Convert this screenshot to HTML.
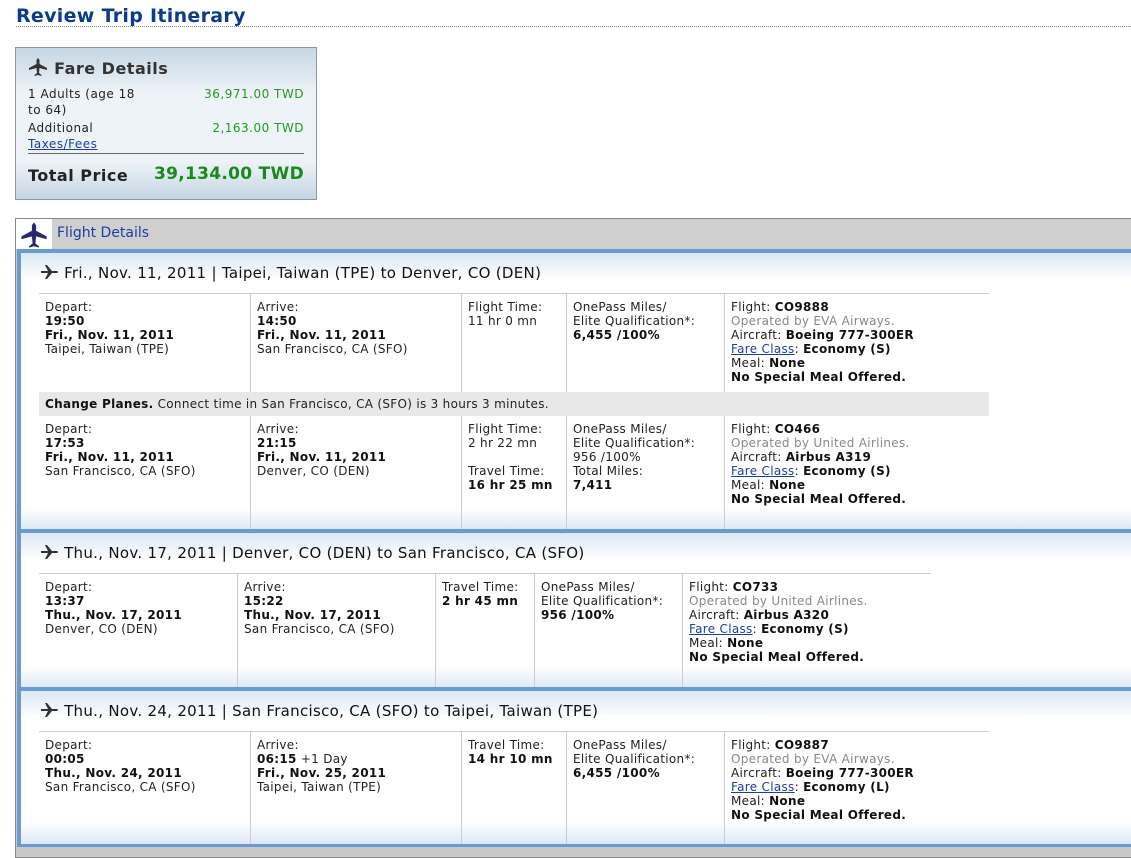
<!DOCTYPE html>
<html><head><meta charset="utf-8"><style>
*{margin:0;padding:0;box-sizing:border-box}
body{width:1131px;height:854px;overflow:hidden;background:#fff;font-family:"DejaVu Sans","Liberation Sans",sans-serif;font-size:12px;letter-spacing:0.3px;color:#222;position:relative}
.abs{position:absolute}
h1{position:absolute;left:16px;top:5px;font-size:19px;font-weight:bold;color:#0b3b8c;letter-spacing:0.3px}
.dots{position:absolute;left:16px;top:26px;width:1115px;border-top:1px dotted #888}
.fare{position:absolute;left:15px;top:47px;width:302px;height:153px;border:1px solid #8a96a2;background:linear-gradient(#c6d6e4,#eef3f8 30%,#eef3f8 75%,#c5d5e3);letter-spacing:0.5px}
.fare .t{position:absolute;left:12px;top:10px;font-size:16px;font-weight:bold;color:#333}
.g{color:#229922}
a{color:#1a3ea8;text-decoration:underline}
.outer{position:absolute;left:15px;top:218px;width:1116px;height:640px;border:1px solid #888;border-right:none;background:#c8c8c8}
.fh{position:absolute;left:0;top:0;width:1116px;height:30px;background:#cfcfcf}
.fh .ic{position:absolute;left:0;top:0;width:36px;height:30px;background:#fff}
.fh .tx{position:absolute;left:41px;top:6px;font-size:14px;color:#1a3ea8;letter-spacing:0}
.sec{position:absolute;left:1px;width:1115px;border-top:4px solid #6a9bd0;border-left:4px solid #6a9bd0;background:linear-gradient(#dce8f4,#fff 28px,#fff calc(100% - 22px),#dce8f4)}
.sh{position:absolute;left:20px;top:11px;font-size:15px;color:#111}
.row{position:absolute;left:18px;border-top:1px solid #ccc}
.c{position:absolute;top:0;padding:6px 6px;line-height:14px;border-left:1px solid #ccc;height:100%;white-space:nowrap}
.c:first-child{border-left:none}
b{color:#111}
.gr{color:#888}
.band{position:absolute;left:18px;width:950px;height:24px;background:#e8e8e8;padding:4px 6px;line-height:16px}
</style></head><body>
<h1>Review Trip Itinerary</h1><div class="dots"></div>
<div class="fare">
<div class="t"><svg width="20" height="18" viewBox="0 0 20 18" style="vertical-align:-2px"><path d="M10 0 L11.5 2 L11.5 6 L19 10 L19 12 L11.5 10 L11 15 L13.5 17 L13.5 18 L10 17 L6.5 18 L6.5 17 L9 15 L8.5 10 L1 12 L1 10 L8.5 6 L8.5 2 Z" fill="#333"/></svg> Fare Details</div>
<div class="abs" style="left:12px;top:38px;line-height:16px;width:118px">1 Adults (age 18 to 64)</div>
<div class="abs g" style="right:12px;top:38px;line-height:16px">36,971.00 TWD</div>
<div class="abs" style="left:12px;top:72px;line-height:16px">Additional<br><a>Taxes/Fees</a></div>
<div class="abs g" style="right:12px;top:72px;line-height:16px">2,163.00 TWD</div>
<div class="abs" style="left:12px;top:105px;width:276px;border-top:1px solid #666"></div>
<div class="abs" style="left:12px;top:118px;font-size:16px;font-weight:bold;color:#222">Total Price</div>
<div class="abs" style="right:12px;top:116px;font-size:17px;font-weight:bold;color:#1a8a1a;letter-spacing:0.3px">39,134.00 TWD</div>
</div>
<div class="outer">
<div class="fh"><div class="ic"><svg width="28" height="26" viewBox="0 0 20 18" style="margin:3px 4px"><path d="M10 0 L11.5 2 L11.5 6 L19 10 L19 12 L11.5 10 L11 15 L13.5 17 L13.5 18 L10 17 L6.5 18 L6.5 17 L9 15 L8.5 10 L1 12 L1 10 L8.5 6 L8.5 2 Z" fill="#2a2a6a"/></svg></div><div class="tx">Flight Details</div></div>

<div class="sec" style="top:30px;height:281px">
<div class="sh"><svg width="18" height="14" viewBox="0 0 18 14" style="vertical-align:-1px"><path d="M0 6 L7 6 L4 0 L6 0 L11 6 L16 6 Q18 7 16 8 L11 8 L6 14 L4 14 L7 8 L0 8 Z" fill="#333"/></svg> Fri., Nov. 11, 2011 | Taipei, Taiwan (TPE) to Denver, CO (DEN)</div>
<div class="row" style="top:40px;width:950px;height:99px">
<div class="c" style="left:0;width:211px">Depart:<br><b>19:50<br>Fri., Nov. 11, 2011</b><br>Taipei, Taiwan (TPE)</div>
<div class="c" style="left:211px;width:211px">Arrive:<br><b>14:50<br>Fri., Nov. 11, 2011</b><br>San Francisco, CA (SFO)</div>
<div class="c" style="left:422px;width:105px">Flight Time:<br>11 hr 0 mn</div>
<div class="c" style="left:527px;width:158px">OnePass Miles/<br>Elite Qualification*:<br><b>6,455 /100%</b></div>
<div class="c" style="left:685px;width:265px">Flight: <b>CO9888</b><br><span class="gr">Operated by EVA Airways.</span><br>Aircraft: <b>Boeing 777-300ER</b><br><a>Fare Class</a>: <b>Economy (S)</b><br>Meal: <b>None</b><br><b>No Special Meal Offered.</b></div>
</div>
<div class="band" style="top:139px"><b>Change Planes.</b> Connect time in San Francisco, CA (SFO) is 3 hours 3 minutes.</div>
<div class="row" style="top:163px;width:950px;height:114px;border-top:none">
<div class="c" style="left:0;width:211px">Depart:<br><b>17:53<br>Fri., Nov. 11, 2011</b><br>San Francisco, CA (SFO)</div>
<div class="c" style="left:211px;width:211px">Arrive:<br><b>21:15<br>Fri., Nov. 11, 2011</b><br>Denver, CO (DEN)</div>
<div class="c" style="left:422px;width:105px">Flight Time:<br>2 hr 22 mn<br><br>Travel Time:<br><b>16 hr 25 mn</b></div>
<div class="c" style="left:527px;width:158px">OnePass Miles/<br>Elite Qualification*:<br>956 /100%<br>Total Miles:<br><b>7,411</b></div>
<div class="c" style="left:685px;width:265px">Flight: <b>CO466</b><br><span class="gr">Operated by United Airlines.</span><br>Aircraft: <b>Airbus A319</b><br><a>Fare Class</a>: <b>Economy (S)</b><br>Meal: <b>None</b><br><b>No Special Meal Offered.</b></div>
</div>
</div>

<div class="sec" style="top:310px;height:159px">
<div class="sh"><svg width="18" height="14" viewBox="0 0 18 14" style="vertical-align:-1px"><path d="M0 6 L7 6 L4 0 L6 0 L11 6 L16 6 Q18 7 16 8 L11 8 L6 14 L4 14 L7 8 L0 8 Z" fill="#333"/></svg> Thu., Nov. 17, 2011 | Denver, CO (DEN) to San Francisco, CA (SFO)</div>
<div class="row" style="top:40px;width:892px;height:115px">
<div class="c" style="left:0;width:198px">Depart:<br><b>13:37<br>Thu., Nov. 17, 2011</b><br>Denver, CO (DEN)</div>
<div class="c" style="left:198px;width:198px">Arrive:<br><b>15:22<br>Thu., Nov. 17, 2011</b><br>San Francisco, CA (SFO)</div>
<div class="c" style="left:396px;width:99px">Travel Time:<br><b>2 hr 45 mn</b></div>
<div class="c" style="left:495px;width:148px">OnePass Miles/<br>Elite Qualification*:<br><b>956 /100%</b></div>
<div class="c" style="left:643px;width:249px">Flight: <b>CO733</b><br><span class="gr">Operated by United Airlines.</span><br>Aircraft: <b>Airbus A320</b><br><a>Fare Class</a>: <b>Economy (S)</b><br>Meal: <b>None</b><br><b>No Special Meal Offered.</b></div>
</div>
</div>

<div class="sec" style="top:468px;height:157px">
<div class="sh"><svg width="18" height="14" viewBox="0 0 18 14" style="vertical-align:-1px"><path d="M0 6 L7 6 L4 0 L6 0 L11 6 L16 6 Q18 7 16 8 L11 8 L6 14 L4 14 L7 8 L0 8 Z" fill="#333"/></svg> Thu., Nov. 24, 2011 | San Francisco, CA (SFO) to Taipei, Taiwan (TPE)</div>
<div class="row" style="top:40px;width:950px;height:113px">
<div class="c" style="left:0;width:211px">Depart:<br><b>00:05<br>Thu., Nov. 24, 2011</b><br>San Francisco, CA (SFO)</div>
<div class="c" style="left:211px;width:211px">Arrive:<br><b>06:15</b> +1 Day<br><b>Fri., Nov. 25, 2011</b><br>Taipei, Taiwan (TPE)</div>
<div class="c" style="left:422px;width:105px">Travel Time:<br><b>14 hr 10 mn</b></div>
<div class="c" style="left:527px;width:158px">OnePass Miles/<br>Elite Qualification*:<br><b>6,455 /100%</b></div>
<div class="c" style="left:685px;width:265px">Flight: <b>CO9887</b><br><span class="gr">Operated by EVA Airways.</span><br>Aircraft: <b>Boeing 777-300ER</b><br><a>Fare Class</a>: <b>Economy (L)</b><br>Meal: <b>None</b><br><b>No Special Meal Offered.</b></div>
</div>
</div>
<div class="abs" style="left:1px;top:625px;width:1115px;height:3px;background:#6a9bd0"></div>
</div>
</body></html>
